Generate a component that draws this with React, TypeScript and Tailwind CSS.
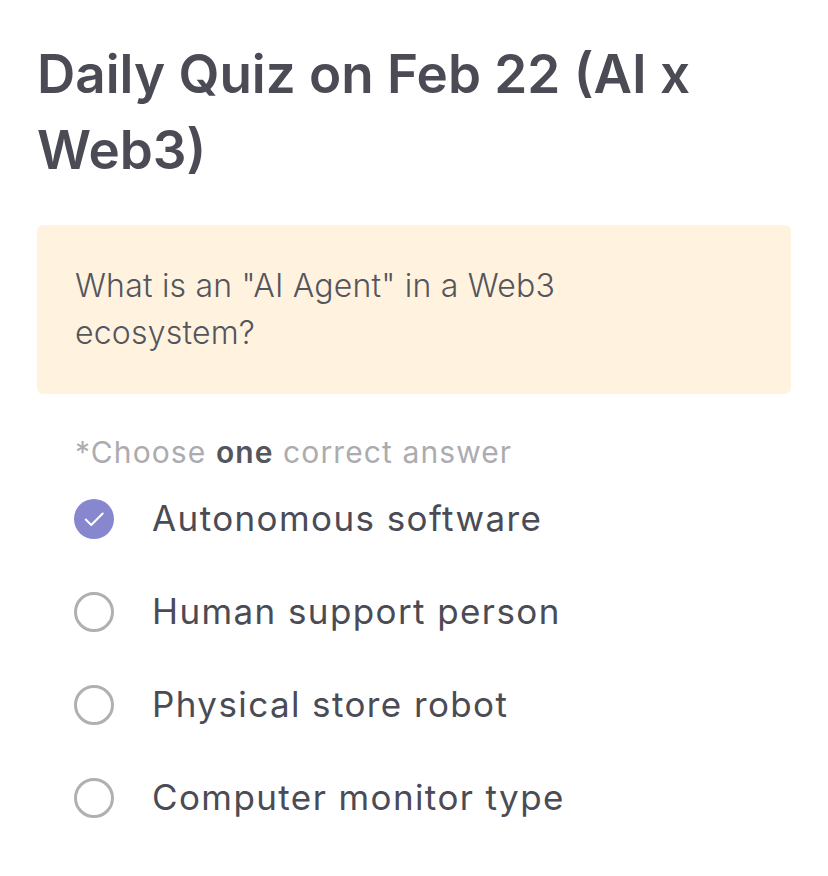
import { useState } from 'react';

const options = [
    'Autonomous software',
    'Human support person',
    'Physical store robot',
    'Computer monitor type',
];

export default function App() {
    const [selected, setSelected] = useState(0);

    return (
        <div className="min-h-screen bg-white px-[37px] pt-[36px] font-['Inter',sans-serif]">
            <h1 className="text-[53px] leading-[76px] font-semibold text-[#4b4b55]">
                Daily Quiz on Feb 22 (AI x Web3)
            </h1>

            {/* Kotak pertanyaan */}
            <div className="mt-[37px] rounded-md bg-[#fff3e0] px-[38px] pt-[37px] pb-[38px]">
                <p className="text-[32px] leading-[47px] font-light tracking-[0.2px] text-[#55555c] max-w-[540px]">
                    What is an "AI Agent" in a Web3 ecosystem?
                </p>
            </div>

            <p className="mt-[36px] pl-[38px] text-[30px] leading-[44px] tracking-[1.1px] text-[#acacb0]">
                *Choose <span className="font-semibold text-[#55555c]">one</span> correct answer
            </p>

            <div className="-mt-[2px] flex flex-col">
                {options.map((opt, i) => (
                    <button
                        key={i}
                        onClick={() => setSelected(i)}
                        className="flex items-center h-[93px] pl-[37px] text-left"
                    >
                        {selected === i ? (
                            <span className="flex items-center justify-center w-[40px] h-[40px] rounded-full bg-[#8787d0]">
                                <svg width="22" height="22" viewBox="0 0 24 24" fill="none" stroke="white" strokeWidth="2.2" strokeLinecap="round" strokeLinejoin="round">
                                    <path d="M3 12.5l6 6L21.5 6" />
                                </svg>
                            </span>
                        ) : (
                            <span className="w-[40px] h-[40px] rounded-full border-[3px] border-[#b0b0b2]" />
                        )}
                        <span className="ml-[38px] text-[35px] tracking-[1.4px] text-[#4b4b55]">{opt}</span>
                    </button>
                ))}
            </div>
        </div>
    );
}
